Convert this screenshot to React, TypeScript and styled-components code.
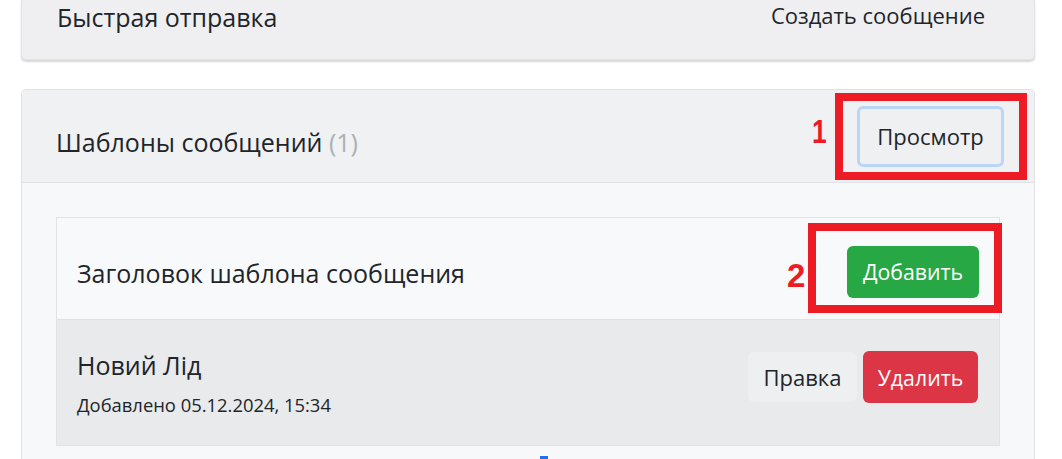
import React from "react";
import styled, { createGlobalStyle } from "styled-components";

const GlobalStyle = createGlobalStyle`
  html, body { margin: 0; padding: 0; background: #ffffff; }
  body {
    font-family: "Open Sans", "Noto Sans", "Liberation Sans", sans-serif;
    color: #212529;
    width: 1062px;
    height: 459px;
    overflow: hidden;
  }
  * { box-sizing: border-box; }
`;

const Page = styled.div`
  display: flex;
  flex-direction: column;
  gap: 29px;
  padding: 0 27px 0 21px;
  width: 1062px;
  height: 459px;
  overflow: hidden;
`;

const QuickCard = styled.div`
  flex: none;
  height: 60px;
  display: flex;
  justify-content: space-between;
  align-items: flex-start;
  padding: 0 49px 0 35px;
  background: #efeff1;
  border: 1px solid #e2e3e6;
  border-top: none;
  border-radius: 0 0 5px 5px;
  box-shadow: 0 2px 2px rgba(0, 0, 0, 0.16);
`;

const QuickTitle = styled.div`
  font-size: 25px;
  line-height: 34px;
`;

const LinkText = styled.div`
  font-size: 22px;
  line-height: 30px;
`;

const TemplatesCard = styled.div`
  flex: none;
  display: flex;
  flex-direction: column;
  background: #f7f8fa;
  border: 1px solid #e0e2e5;
  border-radius: 5px;
  min-height: 400px;
`;

const CardHeader = styled.div`
  height: 93px;
  display: flex;
  align-items: center;
  justify-content: space-between;
  padding: 0 30px 0 34px;
  background: #f0f1f3;
  border-bottom: 1px solid #dfe1e4;
  border-radius: 5px 5px 0 0;
`;

const HeaderTitle = styled.div`
  font-size: 25px;
  line-height: 30px;
  margin-top: 11px;
`;

const Count = styled.span`
  color: #aab0b6;
`;

const CardBody = styled.div`
  padding: 34px 34px 0 34px;
  display: flex;
  flex-direction: column;
`;

const InnerCard = styled.div`
  border: 1px solid #e1e3e6;
  background: #f8f9fb;
  display: flex;
  flex-direction: column;
`;

const InnerHeader = styled.div`
  height: 102px;
  display: flex;
  align-items: center;
  justify-content: space-between;
  padding: 0 20px 0 20px;
  border-bottom: 1px solid #e0e2e5;
`;

const InnerTitle = styled.div`
  font-size: 25px;
  line-height: 30px;
  margin-top: 8px;
`;

const TemplateRow = styled.div`
  height: 125px;
  display: flex;
  align-items: center;
  justify-content: space-between;
  padding: 0 21px 0 20px;
  background: #e9eaec;
`;

const TemplateInfo = styled.div`
  display: flex;
  flex-direction: column;
  gap: 14px;
`;

const TemplateName = styled.div`
  font-size: 25px;
  line-height: 30px;
`;

const TemplateDate = styled.div`
  font-size: 18.4px;
  line-height: 22px;
`;

const Actions = styled.div`
  display: flex;
  align-items: center;
  gap: 6px;
  margin-bottom: 11px;
`;

type Variant = "focus" | "success" | "light" | "danger";

const Button = styled.button<{ $variant: Variant; $w: number; $h: number }>`
  font-family: inherit;
  font-size: ${(p) => (p.$variant === "focus" || p.$variant === "light" ? 22 : 21.3)}px;
  width: ${(p) => p.$w}px;
  height: ${(p) => p.$h}px;
  border-radius: 6px;
  cursor: pointer;
  padding: 0;
  display: flex;
  align-items: center;
  justify-content: center;
  ${(p) =>
    p.$variant === "focus"
      ? `background:#eff0f2;color:#212529;border:3px solid #b9d6f6;`
      : p.$variant === "success"
      ? `background:#28a745;color:#ffffff;border:none;`
      : p.$variant === "danger"
      ? `background:#dc3545;color:#ffffff;border:none;`
      : `background:#eeeff1;color:#212529;border:none;`}
`;

const Annotated = styled.div<{ $shift?: number }>`
  position: relative;
  display: flex;
  margin-top: ${(p) => p.$shift ?? 0}px;
`;

const RedBox = styled.div<{ $t: number; $r: number; $b: number; $l: number }>`
  position: absolute;
  top: -${(p) => p.$t}px;
  right: -${(p) => p.$r}px;
  bottom: -${(p) => p.$b}px;
  left: -${(p) => p.$l}px;
  border: 8px solid #ed1c24;
  pointer-events: none;
`;

const Marker = styled.div<{ $left: number; $top: number; $narrow?: boolean }>`
  position: absolute;
  left: ${(p) => p.$left}px;
  top: ${(p) => p.$top}px;
  font-family: "Liberation Sans", Arial, sans-serif;
  font-weight: 700;
  font-size: 33px;
  line-height: 1;
  color: #ed1c24;
  transform-origin: left center;
  transform: ${(p) => (p.$narrow ? "scaleX(0.8)" : "none")};
`;

const Caret = styled.div`
  margin: 10px 0 0 484px;
  width: 8px;
  height: 10px;
  background: #1a73e8;
`;

export default function App() {
  return (
    <>
      <GlobalStyle />
      <Page>
        <QuickCard>
          <QuickTitle>Быстрая отправка</QuickTitle>
          <LinkText>Создать сообщение</LinkText>
        </QuickCard>
        <TemplatesCard>
          <CardHeader>
            <HeaderTitle>
              Шаблоны сообщений <Count>(1)</Count>
            </HeaderTitle>
            <Annotated>
              <Marker $left={-45} $top={9} $narrow>1</Marker>
              <RedBox $t={13} $r={23} $b={13} $l={22} />
              <Button $variant="focus" $w={147} $h={61}>
                Просмотр
              </Button>
            </Annotated>
          </CardHeader>
          <CardBody>
            <InnerCard>
              <InnerHeader>
                <InnerTitle>Заголовок шаблона сообщения</InnerTitle>
                <Annotated $shift={6}>
                  <Marker $left={-60} $top={13}>2</Marker>
                  <RedBox $t={23} $r={23} $b={15} $l={39} />
                  <Button $variant="success" $w={132} $h={52}>
                    Добавить
                  </Button>
                </Annotated>
              </InnerHeader>
              <TemplateRow>
                <TemplateInfo>
                  <TemplateName>Новий Лід</TemplateName>
                  <TemplateDate>Добавлено 05.12.2024, 15:34</TemplateDate>
                </TemplateInfo>
                <Actions>
                  <Button $variant="light" $w={109} $h={50}>
                    Правка
                  </Button>
                  <Button $variant="danger" $w={115} $h={52}>
                    Удалить
                  </Button>
                </Actions>
              </TemplateRow>
            </InnerCard>
            <Caret />
          </CardBody>
        </TemplatesCard>
      </Page>
    </>
  );
}
